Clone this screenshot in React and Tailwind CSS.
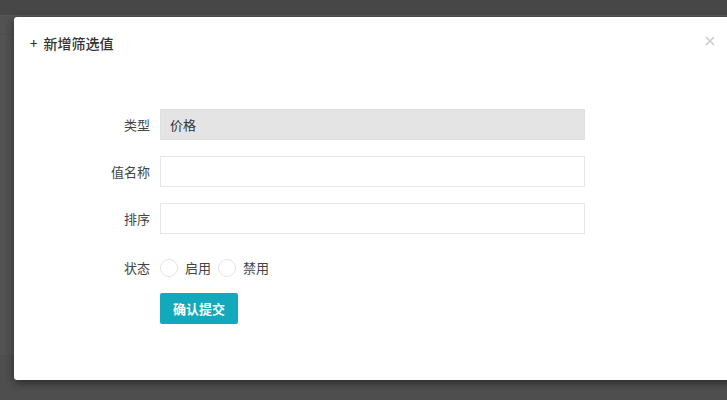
import React from "react";

const font = { fontFamily: '"Noto Sans CJK SC", "Noto Sans", sans-serif' };

function Row({ label, children }) {
  return (
    <div className="flex items-center">
      <div className="w-[146px] pr-[10px] text-right text-[13px] text-[#444]">{label}</div>
      {children}
    </div>
  );
}

function Radio({ label }) {
  return (
    <label className="flex items-center">
      <span className="w-[18px] h-[18px] rounded-full border border-[#e3e3e3] bg-white" />
      <span className="ml-[7px] text-[13px] text-[#444]">{label}</span>
    </label>
  );
}

export default function App() {
  return (
    <div className="relative w-[727px] h-[400px] overflow-hidden bg-[#525252]" style={font}>
      <div className="h-[16px] bg-[#474747] border-b border-[#575757]" />
      <div className="h-[19px] border-b border-[#4e4e4e]" />
      <div className="absolute left-0 right-0 top-[355px] bottom-0 bg-[#4e4e4e]" />

      <div className="absolute left-[14px] top-[17px] w-[730px] h-[363px] bg-white rounded-[3px] shadow-[0_3px_10px_rgba(0,0,0,0.45)]">
        <div className="flex items-center h-[20px] mt-[16px] pl-[16px] text-[14px] font-medium text-[#333]">
          <span className="text-[13px]">+</span>
          <span className="ml-[6px]">新增筛选值</span>
        </div>
        <div className="absolute left-[691px] top-[19px]">
          <svg width="10" height="10" viewBox="0 0 10 10">
            <path d="M1 1 L9 9 M9 1 L1 9" stroke="#c9c9c9" strokeWidth="1.5" />
          </svg>
        </div>

        <div className="mt-[56px] flex flex-col">
          <Row label="类型">
            <div className="w-[425px] h-[31px] bg-[#e4e4e4] border border-[#e0e0e0] flex items-center pl-[9px] text-[13px] text-[#333]">
              价格
            </div>
          </Row>
          <div className="h-[16px]" />
          <Row label="值名称">
            <input className="w-[425px] h-[31px] bg-white border border-[#e6e6e6] outline-none" />
          </Row>
          <div className="h-[16px]" />
          <Row label="排序">
            <input className="w-[425px] h-[31px] bg-white border border-[#e6e6e6] outline-none" />
          </Row>
          <div className="h-[24px]" />
          <Row label="状态">
            <div className="flex items-center gap-[7px] h-[20px]">
              <Radio label="启用" />
              <Radio label="禁用" />
            </div>
          </Row>
          <div className="h-[15px]" />
          <div className="pl-[146px]">
            <button className="w-[78px] h-[31px] rounded-[2px] bg-[#12a9bd] text-white text-[13px] font-semibold">
              确认提交
            </button>
          </div>
        </div>
      </div>
    </div>
  );
}
